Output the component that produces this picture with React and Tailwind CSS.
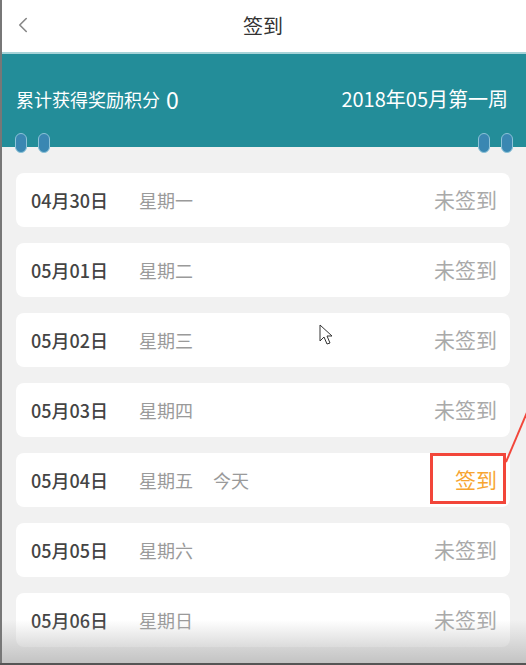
import React from "react";
import { ChevronLeft } from "lucide-react";

const days = [
  { date: "04月30日", week: "星期一" },
  { date: "05月01日", week: "星期二" },
  { date: "05月02日", week: "星期三" },
  { date: "05月03日", week: "星期四" },
  { date: "05月04日", week: "星期五", today: true },
  { date: "05月05日", week: "星期六" },
  { date: "05月06日", week: "星期日" },
];

/* ── binder rings under the banner ── */
function Rings() {
  return (
    <div className="flex gap-[11px]">
      <span className="block w-[12px] h-[20px] rounded-full bg-[#3a87b2] border border-[#8cc3d8]" />
      <span className="block w-[12px] h-[20px] rounded-full bg-[#3a87b2] border border-[#8cc3d8]" />
    </div>
  );
}

function DayRow({ day }) {
  return (
    <div className="relative flex items-center h-[54px] bg-white rounded-lg pl-[15px] pr-[13px]">
      <span className="w-[108px] text-[18px] font-medium text-[#444]">{day.date}</span>
      <span className="text-[18px] text-[#9a9a9a]">{day.week}</span>
      {day.today && <span className="ml-5 text-[18px] text-[#9a9a9a]">今天</span>}
      <span
        className={`ml-auto text-[21px] ${day.today ? "text-[#f7a531]" : "text-[#a9a9a9]"}`}
      >
        {day.today ? "签到" : "未签到"}
      </span>
      {day.today && (
        <div className="absolute right-[4px] top-0 w-[76px] h-[51px] border-[3px] border-[#f2463a]" />
      )}
    </div>
  );
}

export default function App() {
  return (
    <div
      className="relative w-[526px] h-[665px] overflow-hidden bg-[#f1f1f1]"
      style={{ fontFamily: '"Noto Sans CJK SC", "Noto Sans", sans-serif' }}
    >
      {/* header */}
      <div className="relative flex items-center justify-center h-[52px] bg-white">
        <ChevronLeft className="absolute left-[10px] top-[12px] w-[26px] h-[26px] text-[#888]" strokeWidth={1.5} />
        <span className="text-[20px] text-[#333]">签到</span>
      </div>

      {/* banner */}
      <div className="relative h-[95px] bg-[#238d99] border-t-2 border-[#a7d3d8]">
        <div className="flex items-center justify-between pl-4 pr-[18px] pt-[28px]">
          <div className="flex items-center text-white">
            <span className="text-[18px]">累计获得奖励积分</span>
            <span className="ml-[6px] text-[23px]">0</span>
          </div>
          <span className="text-[20px] text-white">2018年05月第一周</span>
        </div>
        <div className="absolute left-[15px] bottom-[-6px]">
          <Rings />
        </div>
        <div className="absolute right-[13px] bottom-[-6px]">
          <Rings />
        </div>
      </div>

      {/* day list */}
      <div className="flex flex-col gap-4 px-4 pt-[26px]">
        {days.map((d) => (
          <DayRow key={d.date} day={d} />
        ))}
      </div>

      {/* annotation line + cursor */}
      <svg className="absolute left-0 top-0 pointer-events-none" width="526" height="665">
        <line x1="506" y1="462" x2="528" y2="410" stroke="#f2463a" strokeWidth="2" />
        <path
          d="M320 325 L320 341 L324 337 L327 344 L330 343 L327 336 L332 336 Z"
          fill="white"
          stroke="#333"
          strokeWidth="1"
        />
      </svg>

      {/* screen edges and bottom shading */}
      <div className="absolute left-0 right-0 bottom-0 h-[45px] bg-gradient-to-b from-transparent to-[#b5b5b5]/80 pointer-events-none" />
      <div className="absolute left-0 top-0 bottom-0 w-[2px] bg-[#777]" />
      <div className="absolute left-0 right-0 bottom-0 h-[2px] bg-[#555]" />
    </div>
  );
}
